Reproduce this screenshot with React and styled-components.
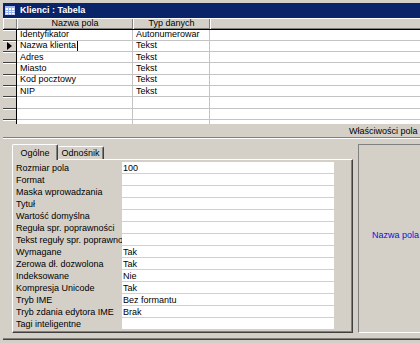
import React from 'react';
import styled, { createGlobalStyle } from 'styled-components';

const Global = createGlobalStyle`
  html, body { margin: 0; padding: 0; background: #d4d0c8; overflow: hidden; }
  body { font-family: "Liberation Sans", Arial, sans-serif; font-size: 9px; color: #000; }
  #root { width: 420px; height: 343px; overflow: hidden; }
`;

const Window = styled.div`
  width: 640px;
  height: 343px;
  box-sizing: border-box;
  padding: 3px 0 0 3px;
  background: #d4d0c8;
  display: flex;
  flex-direction: column;
`;

const TitleBar = styled.div`
  height: 14.5px;
  flex: none;
  background: #0a246a;
  color: #fff;
  font-weight: bold;
  display: flex;
  align-items: center;
  gap: 5px;
  padding-left: 2px;
`;

const Grid = styled.div`
  height: 106.5px;
  flex: none;
  background: #fff;
  overflow: hidden;
  display: flex;
  flex-direction: column;
`;

const Row = styled.div`
  display: grid;
  grid-template-columns: 14px 116px 77px 1fr;
  height: ${p => (p.$header ? 12 : 11.33)}px;
  flex: none;
  box-sizing: border-box;
  border-bottom: 1px solid ${p => (p.$header ? '#000' : '#c4c4c4')};
`;

const HeadCell = styled.div`
  background: #d4d0c8;
  box-shadow: inset 1px 1px 0 #fff, inset -1px -1px 0 #808080;
  display: flex;
  align-items: center;
  justify-content: center;
  line-height: 1;
`;

const Selector = styled.div`
  background: #d4d0c8;
  box-sizing: border-box;
  border-right: 1px solid #000;
  box-shadow: inset 0 1px 0 #fff, inset 0 -1px 0 #404040;
  margin-bottom: -1px;
  display: flex;
  align-items: center;
  justify-content: center;
`;

const Cell = styled.div`
  box-sizing: border-box;
  border-right: ${p => (p.$last ? 'none' : '1px solid #c4c4c4')};
  padding-left: 3px;
  display: flex;
  align-items: center;
  line-height: 1;
  white-space: nowrap;
  overflow: hidden;
`;

const Caret = styled.span`
  display: inline-block;
  width: 1px;
  height: 10px;
  background: #000;
  margin-left: 1px;
`;

const PropsHeader = styled.div`
  height: 13px;
  flex: none;
  display: flex;
  align-items: center;
  padding-left: 346px;
  white-space: nowrap;
`;

const Divider = styled.div`
  height: 0;
  flex: none;
  border-top: 1px solid #808080;
  border-bottom: 1px solid #fff;
`;

const PropsBody = styled.div`
  height: 194px;
  flex: none;
  box-sizing: border-box;
  padding: 5px 0 0 9px;
  display: flex;
  gap: 5px;
`;

const TabControl = styled.div`
  width: 341px;
  flex: none;
  display: flex;
  flex-direction: column;
`;

const TabStrip = styled.div`
  height: 15px;
  display: flex;
  align-items: flex-end;
  position: relative;
  z-index: 1;
`;

const Tab = styled.div`
  width: 46px;
  box-sizing: border-box;
  height: ${p => (p.$active ? 16 : 13)}px;
  margin-bottom: ${p => (p.$active ? -1 : 0)}px;
  background: #d4d0c8;
  border-top: 1px solid #fff;
  border-left: ${p => (p.$active ? '1px solid #fff' : 'none')};
  border-right: 1px solid #404040;
  box-shadow: inset -1px 0 0 #808080;
  border-radius: 2px 2px 0 0;
  display: flex;
  align-items: ${p => (p.$active ? 'flex-start' : 'center')};
  padding-top: ${p => (p.$active ? 3 : 0)}px;
  justify-content: center;
  white-space: nowrap;
`;

const TabPanel = styled.div`
  flex: 1;
  box-sizing: border-box;
  border-top: 1px solid #fff;
  border-left: 1px solid #fff;
  border-right: 1px solid #404040;
  border-bottom: 1px solid #404040;
  box-shadow: inset -1px -1px 0 #808080;
  padding: 2px 18px 0 1px;
  display: flex;
  flex-direction: column;
`;

const PropRow = styled.div`
  display: grid;
  grid-template-columns: 108px 1fr;
  height: 12px;
  flex: none;
`;

const PropLabel = styled.div`
  padding-left: 2px;
  display: flex;
  align-items: center;
  white-space: nowrap;
  overflow: hidden;
`;

const PropValue = styled.div`
  background: #fff;
  box-sizing: border-box;
  border-bottom: 1px solid #d4d0c8;
  padding-left: 1px;
  display: flex;
  align-items: center;
  white-space: nowrap;
`;

const HelpBox = styled.div`
  flex: 1;
  box-sizing: border-box;
  border-top: 1px solid #808080;
  border-left: 1px solid #808080;
  border-bottom: 1px solid #fff;
  border-right: 1px solid #fff;
  display: flex;
  align-items: center;
  padding: 0 0 7px 13px;
  color: #1010d8;
  white-space: nowrap;
`;

const BottomEdge = styled.div`
  margin-top: 5px;
  flex: none;
  height: 0;
  border-top: 1px solid #808080;
  border-bottom: 1px solid #404040;
`;

const TableIcon = () => (
  <svg width="10" height="9" viewBox="0 0 10 9">
    <rect x="0.5" y="0.5" width="9" height="8" fill="#fff" stroke="#c8d0f0" />
    <rect x="0" y="0" width="10" height="2" fill="#9cb4f0" />
    <path d="M0 4.5H10M0 6.5H10M3.5 2V9M6.5 2V9" stroke="#9cb4f0" strokeWidth="1" />
  </svg>
);

const Arrow = () => (
  <svg width="5" height="8" viewBox="0 0 5 8">
    <polygon points="0,0 5,4 0,8" fill="#000" />
  </svg>
);

const fields = [
  ['Identyfikator', 'Autonumerowar'],
  ['Nazwa klienta', 'Tekst', true],
  ['Adres', 'Tekst'],
  ['Miasto', 'Tekst'],
  ['Kod pocztowy', 'Tekst'],
  ['NIP', 'Tekst'],
  ['', ''],
  ['', ''],
  ['', ''],
];

const props = [
  ['Rozmiar pola', '100'],
  ['Format', ''],
  ['Maska wprowadzania', ''],
  ['Tytuł', ''],
  ['Wartość domyślna', ''],
  ['Reguła spr. poprawności', ''],
  ['Tekst reguły spr. poprawności', ''],
  ['Wymagane', 'Tak'],
  ['Zerowa dł. dozwolona', 'Tak'],
  ['Indeksowane', 'Nie'],
  ['Kompresja Unicode', 'Tak'],
  ['Tryb IME', 'Bez formantu'],
  ['Tryb zdania edytora IME', 'Brak'],
  ['Tagi inteligentne', ''],
];

export default function App() {
  return (
    <>
      <Global />
      <Window>
        <TitleBar>
          <TableIcon />
          <span>Klienci : Tabela</span>
        </TitleBar>
        <Grid>
          <Row $header>
            <HeadCell />
            <HeadCell>Nazwa pola</HeadCell>
            <HeadCell>Typ danych</HeadCell>
            <HeadCell />
          </Row>
          {fields.map(([name, type, current], i) => (
            <Row key={i}>
              <Selector>{current && <Arrow />}</Selector>
              <Cell>
                {name}
                {current && <Caret />}
              </Cell>
              <Cell>{type}</Cell>
              <Cell $last />
            </Row>
          ))}
        </Grid>
        <PropsHeader>Właściwości pola</PropsHeader>
        <Divider />
        <PropsBody>
          <TabControl>
            <TabStrip>
              <Tab $active>Ogólne</Tab>
              <Tab>Odnośnik</Tab>
            </TabStrip>
            <TabPanel>
              {props.map(([label, value]) => (
                <PropRow key={label}>
                  <PropLabel>{label}</PropLabel>
                  <PropValue>{value}</PropValue>
                </PropRow>
              ))}
            </TabPanel>
          </TabControl>
          <HelpBox>Nazwa pola może mieć długość do 64 znaków, łącznie ze spacjami.</HelpBox>
        </PropsBody>
        <BottomEdge />
      </Window>
    </>
  );
}
